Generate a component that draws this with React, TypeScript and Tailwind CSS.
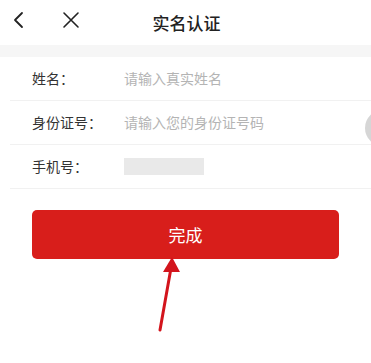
const font = { fontFamily: '"Noto Sans CJK SC", "Noto Sans", sans-serif' };

function Row({ label, children }: { label: string; children: React.ReactNode }) {
  return (
    <div className="ml-[10px] flex h-[44px] items-center border-b border-[#f1f1f1]">
      <span className="w-[114px] pl-[22px] text-[14px] text-[#333]">{label}</span>
      {children}
    </div>
  );
}

export default function App() {
  return (
    <div className="relative h-[363px] w-[371px] overflow-hidden bg-white" style={font}>
      {/* Header */}
      <div className="relative flex h-[45px] items-center">
        <svg className="absolute left-[11px] top-[11px]" width="14" height="18" viewBox="0 0 14 18" fill="none">
          <path d="M11 2 L4 9 L11 16" stroke="#222" strokeWidth="1.8" strokeLinecap="round" strokeLinejoin="round" />
        </svg>
        <svg className="absolute left-[62px] top-[11px]" width="18" height="18" viewBox="0 0 18 18" fill="none">
          <path d="M2 2 L16 16 M16 2 L2 16" stroke="#222" strokeWidth="1.6" strokeLinecap="round" />
        </svg>
        <h1 className="w-full pl-[2px] text-center text-[17px] font-medium text-[#222]">实名认证</h1>
      </div>
      <div className="h-[12px] bg-[#f6f6f6]" />

      {/* Form */}
      <Row label="姓名：">
        <span className="text-[14px] text-[#b4b4b4]">请输入真实姓名</span>
      </Row>
      <Row label="身份证号：">
        <span className="text-[14px] text-[#b4b4b4]">请输入您的身份证号码</span>
      </Row>
      <Row label="手机号：">
        <div className="h-[17px] w-[80px] bg-[#e9e9e9]" />
      </Row>

      <div className="px-[32px] pt-[21px]">
        <button className="flex h-[49px] w-full items-center justify-center rounded-[5px] bg-[#d81e1b] text-[17px] text-white">
          完成
        </button>
      </div>

      {/* annotation arrow */}
      <svg className="absolute left-0 top-0" width="371" height="363" viewBox="0 0 371 363" fill="none">
        <path d="M171 268 L160 330" stroke="#d3141c" strokeWidth="3" strokeLinecap="round" />
        <path d="M172 257 L163 272 L180 272 Z" fill="#d3141c" />
      </svg>

      {/* floating button edge */}
      <div className="absolute left-[365px] top-[110px] h-[36px] w-[36px] rounded-full bg-[#d6d6d6]" />
    </div>
  );
}
